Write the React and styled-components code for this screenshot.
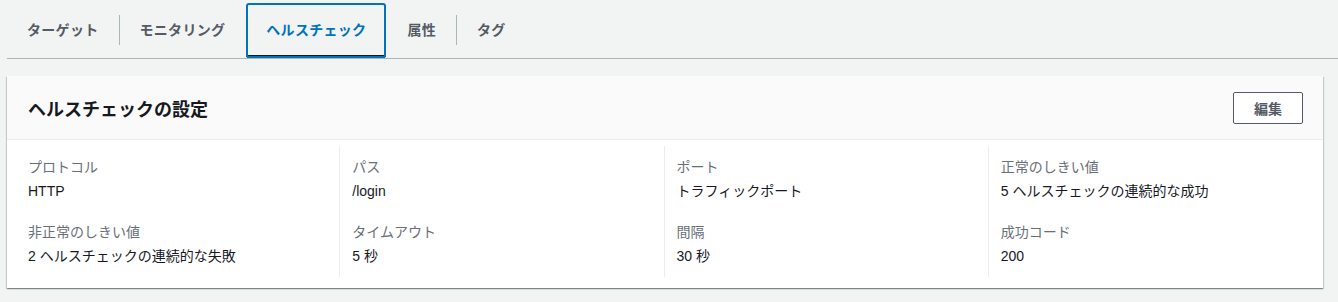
import React from "react";
import styled, { createGlobalStyle } from "styled-components";

const GlobalStyle = createGlobalStyle`
  html, body {
    margin: 0;
    padding: 0;
    background: #f2f3f3;
    font-family: "Liberation Sans", "Noto Sans CJK JP", sans-serif;
    color: #16191f;
  }
`;

const tabs = ["ターゲット", "モニタリング", "ヘルスチェック", "属性", "タグ"];
const activeIndex = 2;

const columns = [
  [
    { label: "プロトコル", value: "HTTP" },
    { label: "非正常のしきい値", value: "2 ヘルスチェックの連続的な失敗" },
  ],
  [
    { label: "パス", value: "/login" },
    { label: "タイムアウト", value: "5 秒" },
  ],
  [
    { label: "ポート", value: "トラフィックポート" },
    { label: "間隔", value: "30 秒" },
  ],
  [
    { label: "正常のしきい値", value: "5 ヘルスチェックの連続的な成功" },
    { label: "成功コード", value: "200" },
  ],
];

const App = () => {
  return (
    <Page>
      <GlobalStyle />
      <TabBar>
        {tabs.map((t, i) => (
          <React.Fragment key={t}>
            {i > 0 && (
              <Divider $hidden={i === activeIndex || i - 1 === activeIndex} />
            )}
            <Tab $active={i === activeIndex}>{t}</Tab>
          </React.Fragment>
        ))}
      </TabBar>
      <Card>
        <CardHeader>
          <Title>ヘルスチェックの設定</Title>
          <EditButton>編集</EditButton>
        </CardHeader>
        <CardBody>
          {columns.map((col, ci) => (
            <Column key={ci} $first={ci === 0}>
              {col.map((item) => (
                <Item key={item.label}>
                  <Label>{item.label}</Label>
                  <Value>{item.value}</Value>
                </Item>
              ))}
            </Column>
          ))}
        </CardBody>
      </Card>
    </Page>
  );
};

const Page = styled.div`
  padding-bottom: 13px;
`;

const TabBar = styled.div`
  display: flex;
  align-items: stretch;
  margin-left: 7px;
  padding-top: 3px;
  height: 55px;
  border-bottom: 1px solid #aab7b8;
`;

const Divider = styled.div`
  width: 1px;
  height: 30px;
  margin-top: 12px;
  background: ${(p) => (p.$hidden ? "transparent" : "#aab7b8")};
`;

const Tab = styled.div`
  display: flex;
  align-items: center;
  padding: 0 20px 3px;
  box-sizing: border-box;
  font-size: 14px;
  font-weight: 700;
  letter-spacing: 0.3px;
  color: ${(p) => (p.$active ? "#0073bb" : "#545b64")};
  border-radius: 3px;
  ${(p) =>
    p.$active &&
    `
    box-shadow: inset 0 0 0 2px #0073bb, inset 0 -3px 0 0 #16191f;
  `}
`;

const Card = styled.section`
  margin: 17px 15px 0 7px;
  background: #ffffff;
  box-shadow: 0 1px 1px 0 rgba(0, 28, 36, 0.3),
    1px 1px 1px 0 rgba(0, 28, 36, 0.15), -1px 1px 1px 0 rgba(0, 28, 36, 0.15);
`;

const CardHeader = styled.div`
  display: flex;
  align-items: center;
  justify-content: space-between;
  height: 63px;
  padding: 0 20px 0 21px;
  background: #fafafa;
  border-bottom: 1px solid #eaeded;
`;

const Title = styled.h2`
  margin: 0;
  font-size: 18px;
  font-weight: 700;
  color: #16191f;
`;

const EditButton = styled.button`
  width: 70px;
  height: 32px;
  background: #ffffff;
  border: 1px solid #545b64;
  border-radius: 2px;
  font-family: inherit;
  font-size: 14px;
  font-weight: 700;
  color: #545b64;
  cursor: pointer;
`;

const CardBody = styled.div`
  display: grid;
  grid-template-columns: repeat(4, 1fr);
  padding: 6px 11px 11px 8px;
`;

const Column = styled.div`
  display: flex;
  flex-direction: column;
  gap: 19px;
  padding: 10px 12px;
  border-left: 1px solid ${(p) => (p.$first ? "transparent" : "#eaeded")};
`;

const Item = styled.div`
  display: flex;
  flex-direction: column;
  gap: 2px;
`;

const Label = styled.div`
  font-size: 14px;
  line-height: 22px;
  color: #687078;
`;

const Value = styled.div`
  font-size: 14px;
  line-height: 22px;
  color: #16191f;
`;

export default App;
